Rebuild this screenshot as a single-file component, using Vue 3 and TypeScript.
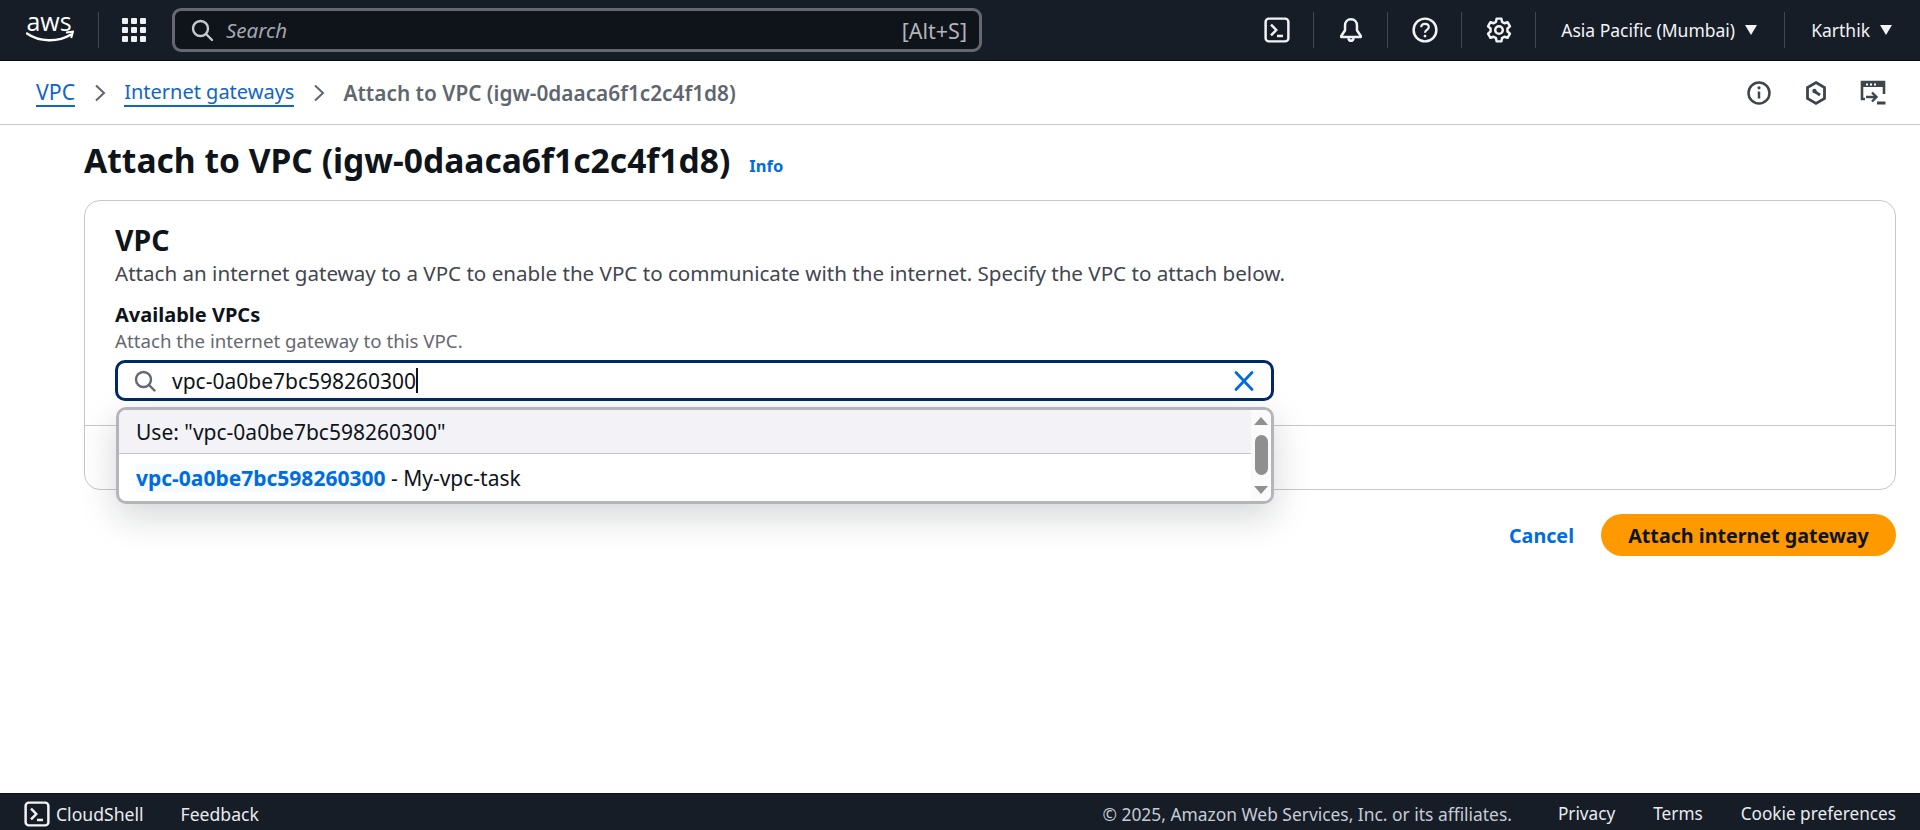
<script setup lang="ts">
const topIcons = ['shell', 'bell', 'help', 'gear'];
</script>

<template>
  <div class="page">
    <header class="top">
      <svg class="aws" width="48" height="50" viewBox="0 -9 48 50" aria-label="aws">
        <text x="23" y="17" text-anchor="middle" class="awstext">aws</text>
        <path d="M1 19.5c12 8.5 31 9 44 1" fill="none" stroke="#fff" stroke-width="2.4" stroke-linecap="round"/>
        <path d="M40 18.5l7-.8-1.800 6.300" fill="none" stroke="#fff" stroke-width="2"/>
      </svg>
      <span class="sep sep-a"></span>
      <svg class="grid" width="24" height="24" viewBox="0 0 24 24" fill="#eef1f7">
        <rect x="0" y="0" width="6" height="6" rx="1"/><rect x="9" y="0" width="6" height="6" rx="1"/><rect x="18" y="0" width="6" height="6" rx="1"/>
        <rect x="0" y="9" width="6" height="6" rx="1"/><rect x="9" y="9" width="6" height="6" rx="1"/><rect x="18" y="9" width="6" height="6" rx="1"/>
        <rect x="0" y="18" width="6" height="6" rx="1"/><rect x="9" y="18" width="6" height="6" rx="1"/><rect x="18" y="18" width="6" height="6" rx="1"/>
      </svg>
      <div class="search">
        <svg width="24" height="24" viewBox="0 0 24 24" fill="none" stroke="#c6c9cf" stroke-width="2.4"><circle cx="10.5" cy="10.5" r="7.5"/><path d="M16 16l6 6" stroke-linecap="round"/></svg>
        <span class="ph">Search</span>
        <span class="kbd">[Alt+S]</span>
      </div>
      <div class="right">
        <template v-for="n in topIcons" :key="n">
          <div class="ic">
            <svg v-if="n === 'shell'" width="26" height="26" viewBox="0 0 24 24" fill="none" stroke="#f2f3f7" stroke-width="2.300"><rect x="1.500" y="1.500" width="21" height="21" rx="3"/><path d="M6.500 7l4.800 5-4.800 5"/><path d="M12 17.500h5.500"/></svg>
            <svg v-else-if="n === 'bell'" width="26" height="26" viewBox="0 0 24 24" fill="none" stroke="#f2f3f7" stroke-width="2.300" stroke-linejoin="round"><path d="M12 2c-3.400 0-5.500 2.600-5.500 5.800v4.400L3 17.500v1h18v-1l-3.500-5.300V7.800C17.500 4.600 15.400 2 12 2z"/><path d="M9.500 19.500c.4 1.600 1.300 2.500 2.500 2.500s2.100-.9 2.500-2.500"/></svg>
            <svg v-else-if="n === 'help'" width="26" height="26" viewBox="0 0 24 24" fill="none" stroke="#f2f3f7" stroke-width="2.300"><circle cx="12" cy="12" r="10.500"/><path d="M8.500 9.500c0-2 1.500-3.200 3.500-3.200s3.500 1.200 3.500 3c0 2.600-3.500 2.600-3.500 5.200" stroke-width="2"/><circle cx="12" cy="17.600" r="1.300" fill="#f2f3f7" stroke="none"/></svg>
            <svg v-else width="26" height="26" viewBox="0 0 24 24" fill="none" stroke="#f2f3f7" stroke-width="2.300" stroke-linejoin="round"><circle cx="12" cy="12" r="3.500"/><path d="M9.800 1.500h4.400l.6 3 2.200 1.300 2.900-1 2.200 3.800-2.300 2v2.800l2.300 2-2.200 3.800-2.900-1-2.200 1.300-.6 3H9.800l-.6-3L7 18.200l-2.900 1-2.200-3.800 2.300-2v-2.800l-2.300-2 2.200-3.800 2.900 1 2.200-1.300z"/></svg>
          </div>
          <span class="sep"></span>
        </template>
        <div class="menu region">Asia Pacific (Mumbai) <i class="tri"></i></div>
        <span class="sep"></span>
        <div class="menu user">Karthik <i class="tri"></i></div>
      </div>
    </header>

    <nav class="crumbs">
      <a class="link first">VPC</a>
      <svg class="chev" width="12" height="20" viewBox="0 0 12 20" fill="none" stroke="#5f6670" stroke-width="2"><path d="M2 2.500l8 7.500-8 7.500"/></svg>
      <a class="link">Internet gateways</a>
      <svg class="chev" width="12" height="20" viewBox="0 0 12 20" fill="none" stroke="#5f6670" stroke-width="2"><path d="M2 2.500l8 7.500-8 7.500"/></svg>
      <span class="cur">Attach to VPC (igw-0daaca6f1c2c4f1d8)</span>
      <div class="tools">
        <svg width="26" height="26" viewBox="0 0 26 26" fill="none" stroke="#3f454d" stroke-width="2.500"><circle cx="13" cy="13" r="10.500"/><path d="M13 11.500v7" /><circle cx="13" cy="7.800" r="1.600" fill="#3f454d" stroke="none"/></svg>
        <svg width="26" height="26" viewBox="0 0 26 26" fill="none" stroke="#3f454d" stroke-width="2.800"><path d="M13 2.500l8.500 5v11l-8.500 5-8.500-5v-11z"/><path d="M11.500 11.500l5.500 3.500"/><circle cx="11.500" cy="11" r="2.200" fill="#3f454d" stroke="none"/></svg>
        <svg width="26" height="26" viewBox="0 0 26 26" fill="none"><path d="M5 19H2V2h22v12" stroke="#3f454d" stroke-width="2.600"/><path d="M2 2h22v5H2z" fill="#3f454d"/><path d="M6 3.600h2v1.800H6zM10 3.600h2v1.800h-2zM14 3.600h2v1.800h-2z" fill="#fff"/><path d="M6 17h10M12 12.500l4.500 4.500-4.500 4.500" stroke="#3f454d" stroke-width="2.400"/><path d="M17 23h8.500" stroke="#3f454d" stroke-width="3"/></svg>
      </div>
    </nav>

    <main class="main">
      <div class="head">
        <h1>Attach to VPC (igw-0daaca6f1c2c4f1d8)</h1>
        <a class="info">Info</a>
      </div>

      <section class="card">
        <div class="card-body">
          <h2>VPC</h2>
          <p class="desc">Attach an internet gateway to a VPC to enable the VPC to communicate with the internet. Specify the VPC to attach below.</p>
          <div class="label">Available VPCs</div>
          <div class="hint">Attach the internet gateway to this VPC.</div>
          <div class="field">
            <div class="input">
              <svg width="24" height="24" viewBox="0 0 24 24" fill="none" stroke="#656871" stroke-width="2.400"><circle cx="10.500" cy="10.500" r="7.500"/><path d="M16 16l5.500 5.500" stroke-linecap="round"/></svg>
              <span class="val">vpc-0a0be7bc598260300</span><span class="caret"></span>
              <svg class="clear" width="24" height="24" viewBox="0 0 24 24" fill="none" stroke="#006ce0" stroke-width="2.800"><path d="M4 3.500l16 17M20 3.500l-16 17" stroke-linecap="round"/></svg>
            </div>
            <div class="drop">
              <div class="opts">
                <div class="opt use">Use: "vpc-0a0be7bc598260300"</div>
                <div class="opt"><b>vpc-0a0be7bc598260300</b> - My-vpc-task</div>
              </div>
              <div class="bar">
                <svg width="16" height="10" viewBox="0 0 16 10" fill="#8f8f8f"><path d="M8 1l7 8H1z"/></svg>
                <div class="thumb"></div>
                <svg width="16" height="10" viewBox="0 0 16 10" fill="#8f8f8f"><path d="M8 9L1 1h14z"/></svg>
              </div>
            </div>
          </div>
        </div>
        <div class="card-foot"></div>
      </section>

      <div class="actions">
        <a class="cancel">Cancel</a>
        <button class="primary">Attach internet gateway</button>
      </div>
    </main>

    <footer class="foot">
      <svg width="26" height="26" viewBox="0 0 24 24" fill="none" stroke="#f2f3f7" stroke-width="2.300"><rect x="1.500" y="1.500" width="21" height="21" rx="3"/><path d="M6.500 7l4.800 5-4.800 5"/><path d="M12 17.500h5.500"/></svg>
      <span class="cs">CloudShell</span>
      <span class="fb">Feedback</span>
      <span class="copy">© 2025, Amazon Web Services, Inc. or its affiliates.</span>
      <span class="fl">Privacy</span>
      <span class="fl">Terms</span>
      <span class="fl">Cookie preferences</span>
    </footer>
  </div>
</template>

<style>
html, body { margin: 0; background: #fff; }
</style>

<style scoped>
.page {
  height: 830px; width: 1920px; display: flex; flex-direction: column; overflow: hidden;
  font-family: "Noto Sans", "Open Sans", sans-serif; color: #0f141a; background: #fff;
}
.top { height: 60px; flex: none; background: #161d26; display: flex; align-items: center; padding-left: 26px; border-bottom: 1px solid #0b0e13; }
.aws { flex: none; }
.awstext { font-family: "Open Sans", sans-serif; font-size: 25px; fill: #fff; }
.sep { width: 1px; height: 36px; background: #424650; flex: none; }
.sep-a { margin-left: 24px; }
.grid { margin-left: 23px; flex: none; }
.search {
  margin-left: 26px; width: 810px; height: 44px; box-sizing: border-box; flex: none;
  background: #0f141a; border: 3px solid #656871; border-radius: 9px;
  display: flex; align-items: center; padding: 0 12px 0 15px; color: #b4b4bb; font-size: 20.500px;
}
.ph { margin-left: 12px; font-style: italic; color: #a2a6ad; }
.kbd { margin-left: auto; font-size: 21.500px; }
.right { margin-left: auto; display: flex; align-items: center; padding-right: 28px; }
.ic { width: 73px; display: flex; justify-content: center; flex: none; }
.menu { font-size: 17.500px; color: #f2f3f7; display: flex; align-items: center; gap: 10px; white-space: nowrap; }
.region { padding: 0 27px 0 25px; }
.user { padding: 0 0 0 26px; }
.tri { width: 0; height: 0; border-left: 6px solid transparent; border-right: 6px solid transparent; border-top: 10px solid #f2f3f7; }

.crumbs { height: 63px; flex: none; display: flex; align-items: center; padding: 0 34px 0 36px; border-bottom: 1px solid #c6c6cd; font-size: 20px; }
.link { color: #0f66c4; border-bottom: 2px solid #0f66c4; line-height: 27px; }
.first { font-size: 21.300px; }
.chev { margin: 0 18.500px; flex: none; }
.cur { color: #5f6670; font-weight: 600; font-size: 20.800px; }
.tools { margin-left: auto; display: flex; gap: 31px; align-items: center; }

.main { flex: 1; padding: 0 24px 0 84px; display: flex; flex-direction: column; min-height: 0; }
.head { display: flex; align-items: baseline; height: 75px; padding-top: 13px; box-sizing: border-box; }
h1 { margin: 0; font-size: 33.600px; line-height: 44px; font-weight: 700; }
.info { margin-left: 19px; font-size: 16.500px; font-weight: 700; color: #006ce0; position: relative; top: -1px; }
.card { border: 1px solid #c6c6cd; border-radius: 16px; height: 290px; box-sizing: border-box; display: flex; flex-direction: column; }
.card-body { padding: 22px 30px 0; height: 202px; }
.card-foot { flex: 1; border-top: 1px solid #c6c6cd; }
h2 { margin: 0; font-size: 28.500px; line-height: 34px; font-weight: 700; }
.desc { margin: 3px 0 0; font-size: 20.580px; line-height: 26px; color: #424650; }
.label { margin-top: 15px; font-size: 20px; line-height: 28px; font-weight: 700; }
.hint { font-size: 18.700px; line-height: 24px; color: #656871; }
.field { position: relative; width: 1159px; margin-top: 7px; }
.input { height: 41px; box-sizing: border-box; border: 3px solid #002a66; border-radius: 10px; display: flex; align-items: center; padding: 0 15px; font-size: 21px; }
.val { margin-left: 15px; color: #0f141a; }
.caret { width: 1.500px; height: 25px; background: #0f141a; }
.clear { margin-left: auto; }
.drop {
  position: absolute; z-index: 2; left: 1px; top: 47px; width: 1158px; height: 97px; box-sizing: border-box;
  background: #fff; border: 3px solid #b4b4bb; border-radius: 10px; display: flex; overflow: hidden;
  box-shadow: 0 12px 36px rgba(15,20,26,.18);
}
.opts { flex: 1; }
.opt { height: 47px; display: flex; align-items: center; padding-left: 17px; font-size: 21px; white-space: pre; }
.opt b { color: #006ce0; font-weight: 700; background: #f5fbff; }
.use { height: 44px; background: #f3f3f7; border-bottom: 1px solid #c6c6cd; box-sizing: border-box; }
.bar { width: 20px; flex: none; background: #fafafa; display: flex; flex-direction: column; align-items: center; justify-content: space-between; padding: 6px 0; box-sizing: border-box; }
.thumb { width: 13px; height: 40px; border-radius: 7px; background: #8f8f8f; margin-top: -2px; }

.actions { margin-top: 24px; display: flex; justify-content: flex-end; align-items: center; gap: 27px; }
.cancel { font-size: 19.700px; font-weight: 700; color: #006ce0; }
.primary { width: 295px; height: 42px; border: 0; border-radius: 21px; background: #ff9900; color: #0f141a; font: 700 19.700px "Noto Sans", sans-serif; padding: 0; }

.foot { height: 37px; flex: none; background: #161d26; display: flex; align-items: center; padding: 3px 24px 0; color: #e8ebf0; font-size: 17.600px; border-top: 1px solid #0b0e13; box-sizing: border-box; }
.cs { margin-left: 6px; }
.fb { margin-left: 37px; }
.copy { margin-left: auto; color: #c6ccd6; font-size: 17.400px; }
.fl { margin-left: 38px; font-size: 17.200px; }
.copy + .fl { margin-left: 46px; }
</style>
